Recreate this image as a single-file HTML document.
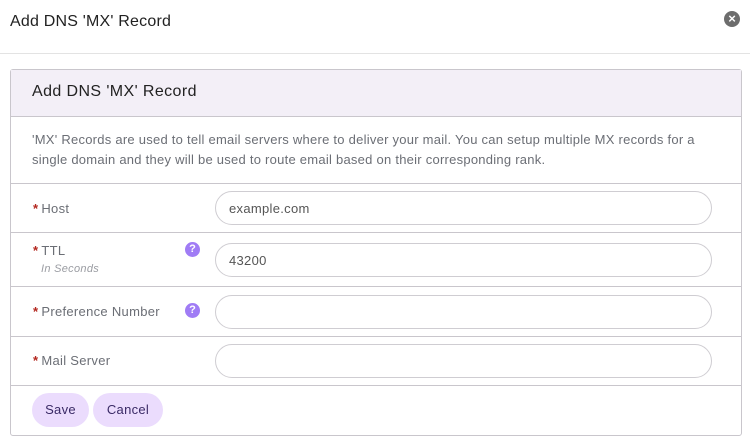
<!DOCTYPE html>
<html><head><style>
*{box-sizing:border-box;margin:0;padding:0}
body{width:750px;height:446px;background:#fff;font-family:"Liberation Sans",sans-serif;position:relative;overflow:hidden;color:#333;letter-spacing:0.3px}
.a{position:absolute}
.hl{background:#c9c6cc;height:1px;left:11px;width:730px}
.lbl{left:33px;font-size:13px;color:#6b6e75}
.lbl b{color:#b3261e;font-weight:bold;margin-right:3px}
.inp{left:215px;width:497px;height:34px;border:1px solid #cfcdd2;border-radius:17px;font-size:13px;color:#555;padding:9px 0 0 13px}
.q{width:15px;height:15px;border-radius:50%;background:#a07cf5;color:#fff;font-size:11px;font-weight:bold;text-align:center;line-height:15px;left:185px;letter-spacing:0}
.btn{background:#ebdcfd;border-radius:17px;height:34px;top:393px;font-size:13px;color:#3a2a66;text-align:center;line-height:34px}
</style></head><body>
<div class="a" style="left:10px;top:13px;font-size:16px;color:#222;letter-spacing:0.2px">Add DNS 'MX' Record</div>
<div class="a" style="left:724px;top:11px;width:16px;height:16px;border-radius:50%;background:#6d6d6d;color:#fff;font-size:13px;line-height:16px;text-align:center;font-weight:bold;letter-spacing:0">×</div>
<div class="a" style="left:0;top:53px;width:750px;height:1px;background:#e3e3e3"></div>
<div class="a" style="left:10px;top:69px;width:732px;height:367px;border:1px solid #c9c6cc;border-radius:3px"></div>
<div class="a" style="left:11px;top:70px;width:730px;height:46px;background:#f3eff7"></div>
<div class="a" style="left:32px;top:83px;font-size:16px;color:#222;letter-spacing:0.4px">Add DNS 'MX' Record</div>
<div class="a hl" style="top:116px"></div>
<div class="a" style="left:32px;top:130px;width:700px;font-size:13px;line-height:20px;color:#6b6e75;letter-spacing:0.25px">'MX' Records are used to tell email servers where to deliver your mail. You can setup multiple MX records for a single domain and they will be used to route email based on their corresponding rank.</div>
<div class="a hl" style="top:183px"></div>
<div class="a lbl" style="top:201px"><b>*</b>Host</div>
<div class="a inp" style="top:191px">example.com</div>
<div class="a hl" style="top:232px"></div>
<div class="a lbl" style="top:243px"><b>*</b>TTL</div>
<div class="a" style="left:41px;top:263px;font-size:11px;font-style:italic;color:#9a9ca2">In Seconds</div>
<div class="a q" style="top:242px">?</div>
<div class="a inp" style="top:243px">43200</div>
<div class="a hl" style="top:286px"></div>
<div class="a lbl" style="top:304px"><b>*</b>Preference Number</div>
<div class="a q" style="top:303px">?</div>
<div class="a inp" style="top:295px"></div>
<div class="a hl" style="top:336px"></div>
<div class="a lbl" style="top:353px"><b>*</b>Mail Server</div>
<div class="a inp" style="top:344px"></div>
<div class="a hl" style="top:385px"></div>
<div class="a btn" style="left:32px;width:57px">Save</div>
<div class="a btn" style="left:93px;width:70px">Cancel</div>
</body></html>
